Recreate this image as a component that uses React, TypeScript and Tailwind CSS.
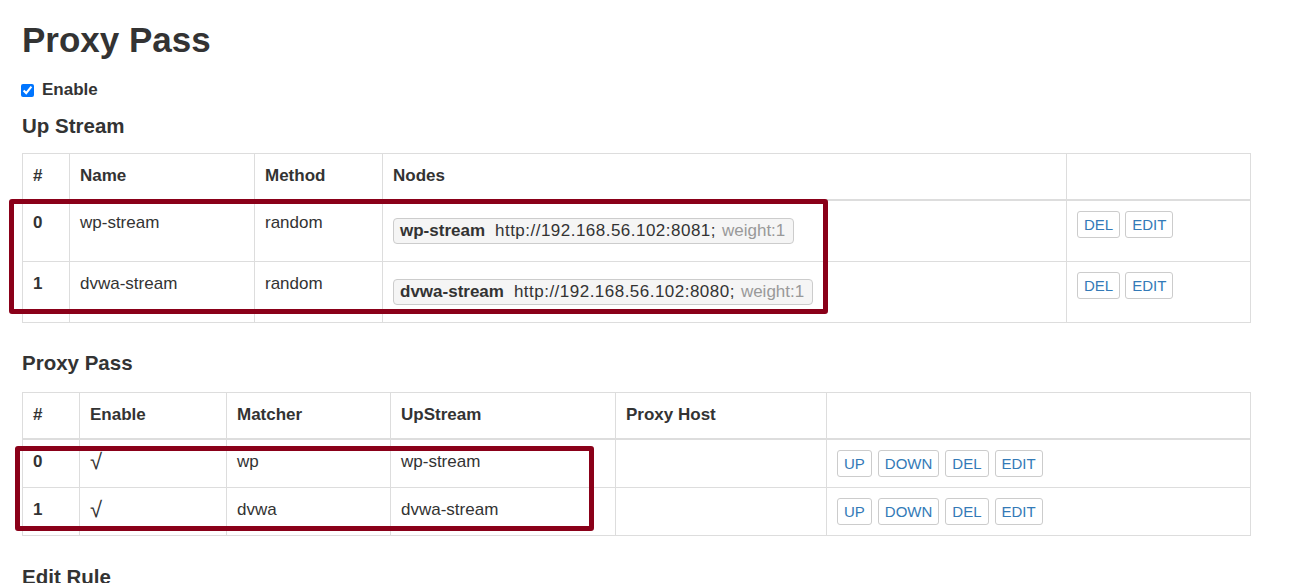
import React from 'react'

type Upstream = { id: number; name: string; method: string; url: string; weight: number }
type Rule = { id: number; matcher: string; upstream: string; host: string }

const upstreams: Upstream[] = [
  { id: 0, name: 'wp-stream', method: 'random', url: 'http://192.168.56.102:8081', weight: 1 },
  { id: 1, name: 'dvwa-stream', method: 'random', url: 'http://192.168.56.102:8080', weight: 1 },
]

const rules: Rule[] = [
  { id: 0, matcher: 'wp', upstream: 'wp-stream', host: '' },
  { id: 1, matcher: 'dvwa', upstream: 'dvwa-stream', host: '' },
]

const th = 'border border-[#ddd] border-b-2 px-[10px] pt-[10px] pb-[11px] text-left align-bottom font-bold leading-[24px]'
const td = 'border border-[#ddd] px-[10px] pt-[10px] pb-[10px] align-top leading-[24px]'

const Btn = ({ children }: { children: React.ReactNode }) => (
  <button className="h-[27px] rounded-[3px] border border-[#ccc] bg-white px-[6px] text-[15px] leading-[25px] text-[#337ab7]">
    {children}
  </button>
)

const App = () => {
  return (
    <div className="relative min-h-[583px] bg-white pl-[22px] font-['Liberation_Sans',Arial,sans-serif] text-[17px] text-[#333]">
      <h1 className="pt-[21px] text-[35px] font-bold leading-[1.1]">Proxy Pass</h1>

      <label className="mt-[18px] flex h-[24px] items-center gap-[8px] font-bold">
        <input type="checkbox" defaultChecked className="m-0 ml-[-1px] mt-[1px] h-[13px] w-[13px]" />
        Enable
      </label>

      <h4 className="mt-[13px] text-[20.5px] font-bold leading-[1.1]">Up Stream</h4>

      {/* Up Stream table */}
      <table className="mt-[16px] w-[1228px] table-fixed border-collapse">
        <colgroup>
          <col className="w-[47px]" />
          <col className="w-[185px]" />
          <col className="w-[128px]" />
          <col className="w-[684px]" />
          <col className="w-[184px]" />
        </colgroup>
        <thead>
          <tr>
            <th className={th}>#</th>
            <th className={th}>Name</th>
            <th className={th}>Method</th>
            <th className={th}>Nodes</th>
            <th className={th}></th>
          </tr>
        </thead>
        <tbody>
          {upstreams.map((u) => (
            <tr key={u.id}>
              <td className={td + ' font-bold'}>{u.id}</td>
              <td className={td}>{u.name}</td>
              <td className={td}>{u.method}</td>
              <td className={td}>
                <div className="my-[7px]">
                  <span className="inline-block h-[26px] rounded-[4px] border border-[#ccc] bg-[#f5f5f5] pl-[6px] pr-[8px] leading-[24px] whitespace-nowrap">
                    <b>{u.name}</b>
                    <span className="ml-[10px] tracking-[0.48px]">{u.url};</span>
                    <span className="ml-[6px] text-[#999]">weight:{u.weight}</span>
                  </span>
                </div>
              </td>
              <td className={td}>
                <div className="flex gap-[5px]">
                  <Btn>DEL</Btn>
                  <Btn>EDIT</Btn>
                </div>
              </td>
            </tr>
          ))}
        </tbody>
      </table>

      <h4 className="mt-[29px] text-[20.5px] font-bold leading-[1.1]">Proxy Pass</h4>

      {/* Proxy Pass table */}
      <table className="mt-[17px] w-[1228px] table-fixed border-collapse">
        <colgroup>
          <col className="w-[57px]" />
          <col className="w-[147px]" />
          <col className="w-[164px]" />
          <col className="w-[225px]" />
          <col className="w-[211px]" />
          <col className="w-[424px]" />
        </colgroup>
        <thead>
          <tr>
            <th className={th}>#</th>
            <th className={th}>Enable</th>
            <th className={th}>Matcher</th>
            <th className={th}>UpStream</th>
            <th className={th}>Proxy Host</th>
            <th className={th}></th>
          </tr>
        </thead>
        <tbody>
          {rules.map((r) => (
            <tr key={r.id}>
              <td className={td + ' font-bold'}>{r.id}</td>
              <td className={td}>
                <span className="text-[22px] leading-[24px]">√</span>
              </td>
              <td className={td}>{r.matcher}</td>
              <td className={td}>{r.upstream}</td>
              <td className={td}>{r.host}</td>
              <td className={td}>
                <div className="flex gap-[6px]">
                  <Btn>UP</Btn>
                  <Btn>DOWN</Btn>
                  <Btn>DEL</Btn>
                  <Btn>EDIT</Btn>
                </div>
              </td>
            </tr>
          ))}
        </tbody>
      </table>

      <h4 className="mt-[30px] text-[20.5px] font-bold leading-[1.1]">Edit Rule</h4>

      {/* annotation boxes drawn over the screenshot */}
      <div className="pointer-events-none absolute left-[9px] top-[199px] h-[115px] w-[819px] rounded-[3px] border-[5px] border-[#8a0019]"></div>
      <div className="pointer-events-none absolute left-[15px] top-[446px] h-[85px] w-[579px] rounded-[3px] border-[5px] border-[#8a0019]"></div>
    </div>
  )
}

export default App
